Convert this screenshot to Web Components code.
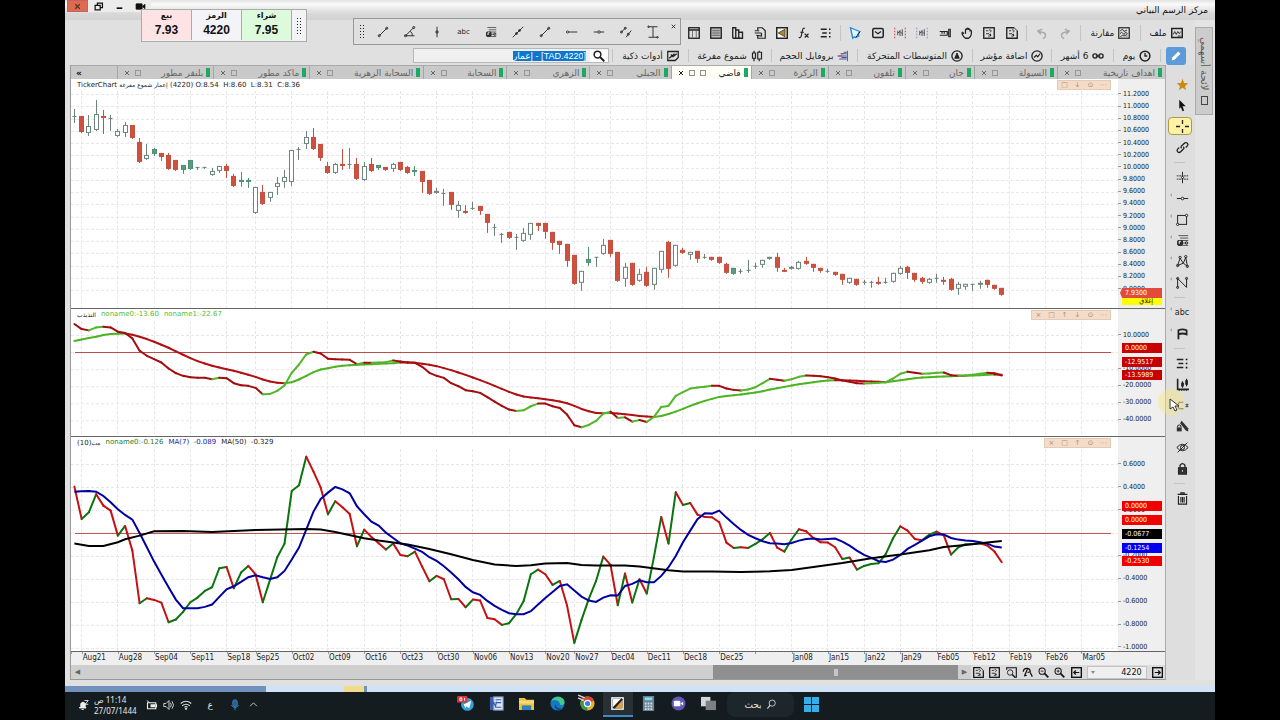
<!DOCTYPE html>
<html lang="ar">
<head>
<meta charset="utf-8">
<title>مركز الرسم البياني</title>
<style>
    body {
        margin: 0;
        background: #000;
        font-family: "DejaVu Sans", "Noto Sans", sans-serif;
        font-size: 9px;
        color: #222;
    }
</style>
</head>
<body>
<chart-desktop></chart-desktop>

<script>
// all icons share a 16x16 box and are stroked with the current colour
const icons = {
    file: '<rect x="1" y="2" width="14" height="12" stroke-width="2"/><path d="M3 10l2-4 2 4 2-4 2 3 2-3M9 12h4"/>',
    compare: '<rect x="1" y="1" width="14" height="14" stroke-width="1.6"/><path d="M3 5l3-2 2 3 4-2M3 9l2-2 3 3 2-3 3 2M3 13l3-2 2 1 4-2"/><path d="M3 7h2M10 12h3" stroke="#777"/>',
    redo: '<path d="M9 3l5 4-5 3M14 7H7C2 7 1 12 5 15" transform="rotate(-15 8 8)" stroke="#aaa" stroke-width="2"/>',
    undo: '<path d="M7 3L2 7l5 3M2 7h7c5 0 6 5 2 8" transform="rotate(15 8 8)" stroke="#aaa" stroke-width="2"/>',
    exportR: '<rect x="1" y="1" width="14" height="14" stroke-width="1.8"/><path d="M4 5h3M8 4c3-1 4 2 1 3M4 9h4l3 3M10 9v3H7"/>',
    exportL: '<path d="M15 5v10H1V1h10" stroke-width="1.8"/><path d="M11 1l4 4M4 5h3M8 4c3-1 4 2 1 3M4 9h4l3 3M10 9v3H7"/>',
    hand: '<path d="M4 9L2 7c-2 1 1 6 4 8h4c4-2 4-6 4-9 0-2-2-2-2 0V4c0-2-2-2-2 0V3c0-2-2-2-2 0v1c0-2-2-2-2 0v5" stroke-width="1.7"/>',
    ruler: '<path d="M1 6h10v5H1M4 6v3M7 6v3M11 8h2M13 3h2v10h-2z" stroke-width="1.5"/>',
    candlesRed: '<path d="M1 1v14M15 1v14" stroke="#c22" stroke-dasharray="2 2"/><path d="M5 5v6M8 4v8M11 3v9M5 8l3-2 3 3" stroke="#444"/>',
    candlesBlue: '<path d="M1 1v14M15 1v14" stroke="#6a86c8" stroke-dasharray="2 2"/><path d="M5 5v6M8 4v8M11 3v9M5 8l3-2 3 3" stroke="#444"/>',
    mail: '<rect x="1" y="2" width="14" height="12" rx="2" stroke-width="2"/><path d="M4 6l4 3 4-3" stroke-width="1.6"/>',
    pointer: '<path d="M2 1l12 5-2 4 1 2-4 2-2-1-2 2z" fill="#e8f4ff" stroke="#1b8be0" stroke-width="1.8"/><path d="M9 14l6-8" stroke="#111"/>',
    list: '<path d="M1 3h8M3 8h6M1 13h8" stroke-width="1.8"/><path d="M12 2h2v2h-2zM12 7h2v2h-2zM12 12h2v2h-2z" fill="#111" stroke="none"/>',
    fx: '<path d="M9 2C6 0 6 5 5 9s-1 6-4 5M3 7h5M9 9l5 5M14 9l-5 5" stroke-width="1.5"/>',
    speaker: '<rect x="1" y="1" width="14" height="14" fill="#fff" stroke-width="2"/><path d="M3 8l9-5v10z" fill="#a98748" stroke="#554019"/>',
    copy: '<path d="M5 4V1h6l4 4v10H5v-3M1 5h6M1 8h9M3 11l7 1V8" stroke-width="1.6"/>',
    buildings: '<path d="M1 15V1h4v14M5 4h4v11M9 7h5v8H1" stroke-width="1.8"/>',
    panel: '<rect x="1" y="1" width="14" height="14" fill="#bbb" stroke-width="1.8"/><path d="M3 5h10M3 8h10M3 11h10" stroke="#555"/>',
    table: '<rect x="1" y="1" width="14" height="14" stroke-width="1.8"/><path d="M1 4h14" stroke-width="2"/><path d="M6 5v9M11 5v9" stroke="#666"/>',
    pencil: '<path d="M2 14l1-4 8-8 3 3-8 8z" fill="#fff" stroke="none"/>',
    clock: '<circle cx="8" cy="8" r="6.5" stroke-width="2"/><path d="M8 4v4h3" stroke-width="1.7"/>',
    chain: '<circle cx="4" cy="8" r="2.8" stroke-width="1.8"/><circle cx="12" cy="8" r="2.8" stroke-width="1.8"/><path d="M5 8h6" stroke-width="1.6"/>',
    indicator: '<circle cx="8" cy="8" r="6.8" stroke-width="1.8"/><path d="M4 10l3-3 2 2 3-4" stroke-width="1.6"/>',
    average: '<circle cx="8" cy="8" r="6.8" stroke-width="1.8"/><path d="M5 11l3-7 3 7zM6 9h4" fill="#222"/>',
    profile: '<path d="M9 3h4M5 5h8M1 8h12M6 10h7M3 12h10" stroke="#46549c" stroke-width="1.5"/><path d="M5 5h4M1 8h6" stroke="#b34848"/><path d="M14 1v14" stroke="#46549c"/>',
    hollow: '<path d="M2 4h4v7H2zM4 1v3M4 11v4M9 3h5v9H9zM11 1v2M11 12v3" stroke-width="1.6"/>',
    smart: '<path d="M1 2h14v8l-4 4H1zM3 11l7-6M5 6l3 3 5-4" stroke-width="1.7"/>',
    search: '<circle cx="6" cy="6" r="4.5" stroke-width="2"/><path d="M9 9l6 6" stroke-width="2.6"/>',
    line: '<path d="M3 13L13 3"/><circle cx="3" cy="13" r="1.4"/><circle cx="13" cy="3" r="1.4"/>',
    angle: '<path d="M2 13L13 2M2 13h12M8 7q4 2 3 6"/><circle cx="2" cy="13" r="1.4"/><circle cx="13" cy="2" r="1.4"/>',
    vline: '<path d="M8 1v14"/><circle cx="8" cy="8" r="1.6"/>',
    hline: '<path d="M1 8h14"/><circle cx="8" cy="8" r="1.6" fill="#fff"/>',
    ray: '<path d="M1 8h14"/><circle cx="2" cy="8" r="1.4" fill="#fff"/>',
    fibo: '<path d="M3 2h12M5 5h10M5 8h10M8 11h5M8 14h7" stroke="#555"/><rect x="2" y="8" width="6" height="6" rx="1" fill="#333" stroke="#222"/><path d="M4 12v-3h2" stroke="#fff"/><circle cx="13" cy="11" r="1.5"/>',
    slope: '<path d="M1 15L15 1"/><circle cx="6" cy="10" r="1.3"/><circle cx="10" cy="6" r="1.3"/>',
    parallel: '<path d="M1 9l7-7M8 15l7-9"/><circle cx="2" cy="8" r="1.3"/><circle cx="7" cy="3" r="1.3"/><circle cx="11" cy="11" r="1.3"/>',
    measure: '<path d="M2 1h12M2 15h12M8 1v14"/><circle cx="2" cy="1" r="1"/><circle cx="14" cy="15" r="1"/>',
    star: '<path d="M8 1l2 5 5 .5-4 3.500 1.500 5L8 12l-4.500 3L5 10 1 6.500 6 6z" fill="#c98c12" stroke="none"/>',
    arrow: '<path d="M4 1l8 8H8l2 5-2 1-2-5-2 2z" fill="#111" stroke="none"/>',
    cross: '<path d="M8 0v5M8 11v5M0 8h5M11 8h5" stroke-width="1.6"/>',
    link: '<path d="M7 9c-2-2 0-3 1-4l2-2c3-3 6 1 4 3l-2 2M9 7c2 2 0 3-1 4l-2 2c-3 3-6-1-4-3l2-2" stroke-width="1.6"/>',
    crossline: '<path d="M8 1v14"/><path d="M1 6h14M1 10h14" stroke-dasharray="2 1"/><circle cx="8" cy="8" r="1.300" fill="#fff"/>',
    square: '<rect x="2" y="3" width="11" height="11"/><circle cx="13" cy="3" r="1.4" fill="#fff"/><circle cx="2" cy="14" r="1.4" fill="#fff"/>',
    pattern: '<path d="M2 13L5 4l4 6 3-7 2 11-5-4z"/><circle cx="2" cy="13" r="1.4"/><circle cx="5" cy="3" r="1.4"/><circle cx="12" cy="2" r="1.4"/><circle cx="14" cy="14" r="1.4"/>',
    zigzag: '<path d="M2 14V3l11 11V3"/><circle cx="2" cy="14" r="1.300"/><circle cx="2" cy="3" r="1.300"/><circle cx="13" cy="3" r="1.300"/>',
    flag: '<path d="M3 3v12M3 4q5-2 10 0v5q-5-2-10 0" stroke-width="2.200"/>',
    chart: '<path d="M2 1v13h14" stroke-width="2"/><path d="M8 4v8M13 1v9M4 15v1M7 15v1M10 15v1M13 15v1" stroke-width="1.400"/><path d="M7 6h2v4H7zM12 3h2v5h-2z" fill="#222"/>',
    magnet: '<path d="M9 4H4q-3 4 0 8h5M12 6l3 4M15 6l-3 4" stroke="#555" stroke-width="1.500"/>',
    editlock: '<path d="M5 4l2-3 8 9v4l-3-1z" fill="#333" stroke="none"/><rect x="1" y="9" width="6" height="5" fill="#333" stroke="none"/><path d="M2 9V7q2-2 4 0v2"/>',
    eye: '<path d="M1 8q7-8 14 0-7 8-14 0zM2 14L14 2"/><circle cx="8" cy="8" r="2.500"/>',
    lock: '<rect x="3" y="7" width="10" height="8" fill="#333"/><path d="M5 7V4q3-4 6 0v3" stroke-width="1.6"/><path d="M8 10v2" stroke="#ddd"/>',
    trash: '<path d="M2 3h12M6 3V1h4v2M3 5v10h10V5M6 6v7M8 6v7M10 6v7" stroke-width="1.4"/>',
    zoomArea: '<path d="M1 4V1h14v14h-3" stroke-width="1.6"/><circle cx="6" cy="8" r="4"/><path d="M9 11l4 4" stroke-width="2"/>',
    zoomPlay: '<path d="M2 7q0-5 5-5t5 5l-4 1M8 3l-4 9M12 8l3 6M3 13l4-1" stroke-width="1.8"/>',
    zoomOut: '<circle cx="6" cy="6" r="4.5" stroke-width="1.5"/><path d="M9 9l6 6" stroke-width="2.400"/><path d="M4 6h4"/>',
    zoomIn: '<circle cx="6" cy="6" r="4.5" stroke-width="1.5"/><path d="M9 9l6 6" stroke-width="2.400"/><path d="M4 6h4M6 4v4"/>',
    boxLeft: '<rect x="1" y="1" width="14" height="14" stroke-width="2"/><path d="M12 8H4M7 5L4 8l3 3" stroke-width="1.8"/>',
    boxRight: '<rect x="1" y="1" width="14" height="14" stroke-width="2"/><path d="M4 8h8M9 5l3 3-3 3" stroke-width="1.8"/>',
    close: '<path d="M4 4l8 8M12 4l-8 8" stroke-width="2"/>',
    restore: '<path d="M6 6V2h9v8h-4M2 6h9v8H2z" stroke-width="2.200"/>',
    minimize: '<path d="M3 11h10" stroke-width="3"/>',
    camera: '<rect x="0" y="3" width="11" height="10" rx="1" fill="#111"/><path d="M11 8l5-4v8z" fill="#111"/>',
    bell: '<path d="M3 12h9l-1-2V6q-3-4-6 0v4zM6 14h3" fill="#eee" stroke="#eee"/><path d="M10 2h5l-4 5h4" stroke="#eee"/>',
    battery: '<path d="M2 5h11v8H2zM14 7v4" stroke="#eee" stroke-width="1.500"/><path d="M6 7h6v4H6z" fill="#eee" stroke="none"/><path d="M1 2l4 3" stroke="#eee"/>',
    sound: '<path d="M1 6h3l4-4v12l-4-4H1zM10 5q2 3 0 6M12 3q4 5 0 10" stroke="#ddd"/>',
    wifi: '<path d="M1 6q7-6 14 0M3 9q5-4 10 0M6 11q2-2 4 0" stroke="#ddd" stroke-width="1.500"/><circle cx="8" cy="13" r="1" fill="#ddd"/>',
    mic: '<rect x="5" y="1" width="6" height="9" rx="3" fill="#285f93" stroke="#3c7fb8"/><path d="M3 8q5 7 10 0M8 12v3" stroke="#3c8bcc"/>',
    up: '<path d="M2 11l6-6 6 6" stroke="#ddd" stroke-width="1.500"/>',
    telegram: '<circle cx="9" cy="9" r="6.800" fill="#35a0d8" stroke="none"/><path d="M5 9l8-4-2 8-3-2-1 2z" fill="#fff" stroke="none"/><rect x="-2" y="0" width="11" height="7" rx="1" fill="#d8363a" stroke="none"/><path d="M1 2v3h2V2zM6 2v3" stroke="#fff" stroke-width="1"/>',
    word: '<rect x="1" y="1" width="10" height="14" fill="#3d5fae" stroke="none"/><rect x="5" y="1" width="10" height="14" fill="#dde6f6" stroke="#8496c2"/><path d="M7 4h6M7 7h6M7 12h6" stroke="#365aa5"/><path d="M2 6l1 5 2-4 2 4 1-5" stroke="#365aa5"/>',
    folder: '<path d="M0 2h6l2 2h8v11H0z" fill="#f2c23d" stroke="none"/><path d="M0 5h16v3H0z" fill="#fadb7c" stroke="none"/><path d="M3 15v-5h10v5z" fill="#2d83bf" stroke="none"/>',
    edge: '<circle cx="8" cy="8" r="7.500" fill="#1778c3" stroke="none"/><path d="M1 6C4-2 16 0 15.500 7c-1 4-5 3-5 1C10 4 3 3 1 6z" fill="#44c98c" stroke="none"/><path d="M6 8c0 4 4 6 8 5-3 4-9 2-9-2z" fill="#0d4c91" stroke="none"/>',
    chrome: '<circle cx="8" cy="8" r="7.500" fill="#e2b627" stroke="none"/><path d="M8 8L1.500 4a7.500 7.500 0 0 1 13.500 1z" fill="#d94436" stroke="none"/><path d="M8 8L1.500 4A7.500 7.500 0 0 0 8 15.500z" fill="#3a9a52" stroke="none"/><circle cx="8" cy="8" r="3.400" fill="#3c7fe0" stroke="#fff"/><path d="M-2-1l7 3M-2 2l6 3" stroke="#ddd" stroke-width="1.500"/>',
    ticker: '<rect x="2" y="2" width="12" height="12" fill="#242424" stroke="#fff" stroke-width="1.500"/><path d="M3 3h9L3 12z" fill="#fff" stroke="none"/><path d="M13 4v9H5z" fill="#e4a32e" stroke="none"/><path d="M4 13l9-10" stroke="#222" stroke-width="2"/>',
    calc: '<rect x="2" y="0" width="12" height="16" fill="#6b8390" stroke="none"/><path d="M4 3h8" stroke="#7fdcf5" stroke-width="3"/><path d="M5 7v8M8 7v8M11 7v8" stroke="#c9e3eb" stroke-width="2" stroke-dasharray="2 1"/>',
    chat: '<circle cx="8" cy="8" r="7.500" fill="#6157b4" stroke="none"/><rect x="3" y="5" width="7" height="6" rx="1" fill="#fff" stroke="none"/><path d="M10 8l3-2v4z" fill="#fff" stroke="none"/>',
    tasks: '<rect x="0" y="1" width="10" height="10" fill="#d6d6d6" stroke="none"/><rect x="5" y="5" width="11" height="10" fill="#7c8082" stroke="none"/>',
    windows: '<path d="M0 0h7.500v7.500H0zM8.500 0H16v7.500H8.500zM0 8.500h7.500V16H0zM8.500 8.500H16V16H8.500z" fill="#36aeea" stroke="none"/>',
    find: '<circle cx="9" cy="6" r="4.500" stroke="#ddd"/><path d="M6 9l-4 5" stroke="#ddd" stroke-width="1.500"/>'
};

class AppIcon extends HTMLElement {

    constructor() {
        super();
        this.attachShadow({ mode: "open" });
    }

    connectedCallback() {
        this.shadowRoot.innerHTML = `
            <style>
                :host { display: block; flex: none; width: 12px; height: 12px; }
                svg { display: block; width: 100%; height: 100%; overflow: visible; }
            </style>
            <svg viewBox="0 0 16 16" fill="none" stroke="currentColor" stroke-width="1.200">${icons[this.getAttribute("name")]}</svg>
        `
    }
}

customElements.define("app-icon", AppIcon);

// a borderless button: icon first, optional caption in the slot
class ToolButton extends HTMLElement {

    constructor() {
        super();
        this.attachShadow({ mode: "open" });
    }

    connectedCallback() {
        this.shadowRoot.innerHTML = `
            <style>
                :host { display: block; }
                button {
                    display: flex;
                    align-items: center;
                    justify-content: center;
                    gap: 4px;
                    width: 100%;
                    padding: 0;
                    border: 0;
                    background: none;
                    color: inherit;
                    font: inherit;
                    white-space: nowrap;
                }
                app-icon { width: var(--icon, 12px); height: var(--icon, 12px); }
            </style>
            <button type="button" aria-label="${this.getAttribute("icon")}">
                <app-icon name="${this.getAttribute("icon")}"></app-icon><slot></slot>
            </button>
        `
    }
}

customElements.define("tool-button", ToolButton);

const buttons = names => names.split(" ").map(n => `<tool-button icon="${n}"></tool-button>`).join("");
// grid tracks that share the width in the given proportions
const tracks = widths => widths.map(w => `minmax(0, ${w}fr)`).join(" ");

class TitleBar extends HTMLElement {

    constructor() {
        super();
        this.attachShadow({ mode: "open" });
    }

    connectedCallback() {
        this.shadowRoot.innerHTML = `
            <style>
                :host {
                    display: flex;
                    justify-content: space-between;
                    height: 20px;
                    background: linear-gradient(#e2e2e2, #fafafa 20%, #d8d8d8 70%, #d2d2d2);
                }
                .controls { display: flex; height: 12px; margin-left: 2px; background: #ececec; color: #111; --icon: 9px; }
                tool-button { display: grid; place-items: center; width: 21px; }
                tool-button:first-child { background: #de6a50; color: #532; outline: 1px solid #b66; outline-offset: -1px; }
                h1 { margin: 0 7px; font-size: 9px; line-height: 20px; font-weight: normal; color: #111; }
            </style>
            <div class="controls">${buttons("close restore minimize camera")}</div>
            <h1 dir="rtl"><slot></slot></h1>
        `
    }
}

customElements.define("title-bar", TitleBar);

class ToolbarRows extends HTMLElement {

    constructor() {
        super();
        this.attachShadow({ mode: "open" });
    }

    connectedCallback() {
        this.shadowRoot.innerHTML = `
            <style>
                :host { display: block; padding-right: 4px; font-size: 9px; }
                .row { display: grid; height: 20px; }
                .row.first { height: 26px; grid-template-columns: ${tracks([50, 60, 54, 186, 161, 609])}; }
                .row.second { height: 19px; grid-template-columns: ${tracks([30, 47, 62, 79, 115, 86, 83, 76, 203, 339])}; }
                .group { display: flex; align-items: center; justify-content: space-around; box-sizing: border-box; min-width: 0; padding: 0 3px; }
                .group + .group { border-right: 1px solid; border-image: linear-gradient(transparent 20%, #c4c4c4 20% 80%, transparent 80%) 1; }
                .pen { display: grid; place-items: center; width: 20px; height: 18px; flex: none; border-radius: 3px; background: #5b9bd8; }
                .search { flex: 1; display: flex; align-items: center; height: 13px; border: 1px solid #b8b8b8; background: #f0f0f0; }
                input { flex: 1; min-width: 0; border: 0; padding: 0 4px; background: #f0f0f0; font: 9px "Liberation Sans", "DejaVu Sans", sans-serif; outline: 0; }
                input::selection { background: #0a78d0; color: #fff; }
                .search tool-button { padding: 0 3px; background: #fff; }
            </style>
            <div class="row first" dir="rtl">
                <div class="group"><tool-button icon="file">ملف</tool-button></div>
                <div class="group"><tool-button icon="compare">مقارنة</tool-button></div>
                <div class="group">${buttons("redo undo")}</div>
                <div class="group">${buttons("exportL exportR hand ruler candlesBlue candlesRed mail pointer")}</div>
                <div class="group">${buttons("list fx speaker copy buildings panel table")}</div>
            </div>
            <div class="row second" dir="rtl">
                <div class="group"><span class="pen"><tool-button icon="pencil"></tool-button></span></div>
                <div class="group"><tool-button icon="clock">يوم</tool-button></div>
                <div class="group"><tool-button icon="chain">6 أشهر</tool-button></div>
                <div class="group"><tool-button icon="indicator">اضافة مؤشر</tool-button></div>
                <div class="group"><tool-button icon="average">المتوسطات المتحركة</tool-button></div>
                <div class="group"><tool-button icon="profile">بروفايل الحجم</tool-button></div>
                <div class="group"><tool-button icon="hollow">شموع مفرغة</tool-button></div>
                <div class="group"><tool-button icon="smart">أدوات ذكية</tool-button></div>
                <div class="group"><div class="search">
                    <tool-button icon="search"></tool-button>
                    <input type="text" aria-label="رمز" dir="rtl" value="[TAD.4220] - إعمار">
                </div></div>
            </div>
        `
        const box = this.shadowRoot.querySelector("input");
        box.focus();
        box.select();
    }
}

customElements.define("toolbar-rows", ToolbarRows);

class TabStrip extends HTMLElement {

    constructor() {
        super();
        this.attachShadow({ mode: "open" });
    }

    connectedCallback() {
        // caption and relative width
        const tabs = [["اهداف تاريخية", 108], ["السيولة", 83], ["جان", 69], ["تلفون", 77], ["الركزة", 77],
            ["فاضي", 80], ["الجبلي", 81], ["الزهري", 83], ["السحابة", 83], ["السحابة الزهرية", 114],
            ["ماكد مطور", 96], ["بلنقر مطور", 96]];
        this.dir = "rtl";
        this.shadowRoot.innerHTML = `
            <style>
                :host { display: grid; grid-template-columns: ${tracks([...tabs.map(t => t[1]), 46])}; height: 14px; background: #c9c9c9; border-top: 1px solid #aaa; box-sizing: border-box; }
                button {
                    display: flex;
                    align-items: center;
                    gap: 3px;
                    min-width: 0;
                    padding: 0 3px 0 5px;
                    border: 0;
                    border-left: 1px solid #a5a5a5;
                    background: none;
                    color: #666;
                    font: inherit;
                    white-space: nowrap;
                }
                button.active { background: #fffff8; color: #222; }
                i { width: 4px; height: 9px; flex: none; background: #1fa863; }
                span { margin-right: auto; }
                b { width: 4px; height: 4px; margin: 0 1px; border: 1px solid currentColor; opacity: 0.5; }
                app-icon { width: 8px; height: 8px; }
                .more { border: 0; justify-content: flex-end; color: #111; font-weight: bold; }
            </style>
            ${tabs.map(([name]) => `
                <button type="button" class="${name === "فاضي" ? "active" : ""}">
                    <i></i>${name}<span></span>${name === "فاضي" ? "<b></b>" : ""}<b></b><app-icon name="close"></app-icon>
                </button>`).join("")}
            <button type="button" class="more">»</button>
        `
    }
}

customElements.define("tab-strip", TabStrip);

const BARS = 128;
const WIDTH = 1047;
const barX = i => 3.4 + i * 7.245;
// bars on which a labelled week starts
const weeks = [1, 6, 11, 16, 21, 25, 30, 35, 40, 45, 50, 55, 60, 65, 69, 74, 79, 84, 89, 94, 99, 104, 109, 114, 119, 124, 129, 134, 139];

// kind, high, body top, body bottom, low
const candles = `d30,37,38,43 r37,37,53,53 h36,47,54,56 h21,35,51,51 r31,37,38,54 d36,39,40,51 h50,52,57,57 h43,46,54,57 r46,46,59,59 r59,63,83,83
h65,76,80,80 g69,70,75,76 r74,74,78,81 r74,76,90,90 r81,81,91,91 g86,86,91,94 g81,81,90,90 d88,88,89,90 d88,88,89,89 h89,92,96,96
h87,87,92,93 r85,87,92,98 r95,97,107,107 g93,101,102,107 g99,101,102,108 h108,108,134,134 r106,113,125,125 h113,113,119,122 h98,104,108,115 h91,98,103,108
h71,71,103,106 d68,70,71,80 h52,58,65,69 r49,58,70,70 r65,65,79,81 r83,87,94,94 h84,85,94,94 r70,85,87,90 d69,85,86,89 r79,85,100,100
h83,87,101,101 r79,85,92,92 g86,86,89,90 r88,88,91,91 h84,85,90,92 r83,83,91,91 r87,88,94,94 g87,91,93,96 r92,92,103,113 r101,101,115,115
h109,112,114,114 d110,114,115,126 r113,113,126,130 h122,126,132,138 r126,132,133,134 d123,129,130,130 r127,127,132,135 r135,135,144,153 d145,148,149,156 d154,155,156,163
r153,153,159,159 d155,158,159,170 h149,154,162,162 h144,144,156,160 r144,144,147,151 r144,144,153,159 r153,153,164,170 r162,162,166,174 r165,165,182,187 r176,176,205,205
h192,192,204,211 g168,180,184,186 d178,178,179,187 h160,166,175,175 r161,161,175,177 r173,173,202,202 h184,188,200,207 r184,184,206,206 h190,195,202,202 r188,193,207,207
h189,189,206,210 h172,172,191,193 r162,163,190,198 h166,166,187,187 r169,171,174,174 h173,173,176,180 r172,172,180,183 d175,178,179,179 r178,178,181,181 r178,178,184,184
r184,185,194,194 g189,189,195,195 d190,192,193,194 d181,191,192,193 d184,187,188,189 h181,181,186,188 h178,178,180,180 r174,178,189,192 r189,191,192,192 h187,188,190,190
h182,183,190,190 r178,182,185,185 r185,185,189,192 r189,189,192,193 d190,192,193,193 r193,193,196,196 r195,195,201,205 h199,199,204,204 r200,200,206,206 d201,203,204,205
d202,203,204,208 r198,203,205,205 d199,203,204,204 h194,194,203,203 h187,189,195,195 r187,188,194,199 r194,194,201,202 r198,199,203,204 h199,200,204,204 d195,199,200,203
r198,201,202,205 r199,200,211,211 h203,205,210,215 h205,205,208,210 d205,205,206,211 h202,204,206,209 r201,201,206,208 r206,206,210,210 r209,209,216,216`.split(/\s+/);

const fast = [72,87,91,82,80,82,95,99,115,152,167,177,187,205,219,227,231,233,233,237,233,234,249,255,257,263,282,281,272,256,218,193,163,155,160,176,177,178,179,192,188,188,187,186,181,184,187,188,200,218,227,233,249,258,270,273,278,291,304,317,328,332,330,318,310,310,318,323,343,375,381,374,362,340,334,353,351,364,359,365,350,320,317,287,276,265,262,260,257,257,265,269,271,268,261,249,236,239,242,237,230,226,227,228,231,235,241,245,249,250,249,248,246,235,221,215,218,221,220,218,217,225,227,226,224,221,218,219,226];
const slow = [123,118,114,110,105,102,101,100,104,110,117,125,134,143,154,164,174,183,190,197,202,207,212,218,224,230,238,244,248,249,246,238,227,216,208,204,200,197,195,194,193,192,191,190,189,187,187,188,191,194,198,204,210,217,224,232,240,248,257,266,275,283,289,292,294,297,300,304,309,317,326,333,338,339,338,340,342,344,347,349,350,347,341,334,326,317,309,302,296,290,287,285,283,280,277,273,268,264,260,256,252,249,246,243,241,240,240,241,242,243,244,245,246,243,240,237,234,232,231,230,229,228,227,227,226,225,224,223,224];
const momentum = [560,657,637,583,617,632,707,678,752,910,895,900,908,967,959,936,907,893,873,862,805,801,865,818,798,823,907,840,772,731,573,556,470,515,563,643,604,622,642,739,689,711,730,749,731,765,769,755,800,844,828,838,898,897,922,899,902,954,958,975,970,942,904,823,809,823,855,843,917,1029,960,897,843,770,795,916,821,908,838,881,770,651,731,577,615,609,644,651,652,667,728,744,742,744,732,718,699,743,755,718,688,694,714,727,728,742,777,773,809,798,792,790,762,715,679,692,717,721,704,695,706,764,742,733,732,730,737,755,787];
const ma7 = [575,574,573,575,588,607,628,645,659,699,742,785,824,862,899,925,925,925,921,914,891,868,859,846,832,826,832,837,832,813,779,743,689,635,597,578,561,568,580,619,643,665,677,698,714,730,737,746,756,772,783,799,818,838,861,877,885,903,918,930,940,943,943,934,914,894,876,858,853,872,890,902,906,893,886,887,858,852,841,847,847,828,802,768,727,692,658,640,641,632,653,672,690,705,715,724,730,731,733,729,722,717,716,719,717,716,725,737,752,765,774,784,786,779,765,747,735,722,709,703,704,714,719,722,723,727,731,740,743];
const ma50 = [[0,731],[2,738],[4,738],[6,727],[7,718],[9,707],[11,694],[15,693],[19,696],[25,690],[32,687],[34,689],[36,696],[40,715],[42,722],[46,734],[49,747],[52,763],[55,780],[58,794],[61,798],[63,796],[65,791],[68,789],[70,795],[72,797],[76,797],[78,800],[82,811],[84,815],[88,815],[92,816],[96,814],[99,810],[102,801],[106,789],[110,775],[114,764],[118,751],[120,741],[123,735],[126,728],[128,723]];

function drawCandles() {
    return candles.map((text, i) => {
        const [high, top, bottom, low] = text.slice(1).split(",").map(Number);
        const kind = text[0];
        const x = Math.floor(barX(i)) + 0.5;
        const stroke = { r: "#c4503f", h: "#6d857b", g: "#4f8f72", d: "#6d7f79" }[kind];
        const fill = { r: "#d0503f", h: "#fff", g: "#5c9b80", d: "#6d7f79" }[kind];
        return `<path d="M${x} ${high}V${low + 1}" stroke="${stroke}"/>` +
            (kind === "d" ? `<path d="M${x - 2} ${top + 0.5}h4" stroke="${stroke}"/>` :
            `<rect x="${x - 2}" y="${top + 0.5}" width="4" height="${Math.max(bottom - top - 1, 1)}" fill="${fill}" stroke="${stroke}"/>`);
    }).join("");
}

// lines are recorded at three units per pixel
const lineY = (value, top) => value / 3 - top;

function drawTrend(values, top, rise, fall) {
    let out = "";
    for (let i = 1; i <= BARS; i++) {
        out += `<path d="M${barX(i - 1)} ${lineY(values[i - 1], top)}L${barX(i)} ${lineY(values[i], top)}" stroke="${values[i] < values[i - 1] ? rise : fall}" stroke-width="2" stroke-linecap="round"/>`;
    }
    return out;
}

function drawLine(points, top, color) {
    const d = points.map(([i, v]) => `${barX(i)},${lineY(v, top)}`).join(" ");
    return `<polyline points="${d}" stroke="${color}" stroke-width="2"/>`;
}

// heights double as the panes' flex shares; an empty label lies fully behind a badge
const panes = {
    price: {
        height: 230, first: 15, step: 12.25,
        labels: Array.from({ length: 17 }, (_, k) => (11.2 - k * 0.2).toFixed(4)),
        tools: ["□", "↓", "⊙", "⋯"],
        legend: '<span>TickerChart <bdi>إعمار شموع مفرغة</bdi> (4220) O:8.54&nbsp; H:8.60&nbsp; L:8.31&nbsp; C:8.36</span>',
        draw: drawCandles,
        badges: [["7.9300", 215, "#e24b3c", "price"], ["إغلاق", 222, "#ff0", "close"]]
    },
    trend: {
        height: 128, first: 26, step: 17,
        labels: ["10.0000", "", "-10.0000", "-20.0000", "-30.0000", "-40.0000"],
        tools: ["×", "□", "↑", "↓", "⊙", "⋯"],
        legend: '<span><bdi>التذبذب</bdi></span><span style="color:#5b3">noname0:-13.60</span><span style="color:#5b3">noname1:-22.67</span>',
        zero: 43,
        draw: () => drawTrend(slow, 9, "#4db323", "#b01012") + drawTrend(fast, 9, "#54b52b", "#a30d10"),
        badges: [["0.0000", 39, "#c80000"], ["-12.9517", 53, "#c80000"], ["-13.5989", 67, "#c80000"]]
    },
    momentum: {
        height: 215, first: 27, step: 23,
        labels: ["0.6000", "0.4000", "0.2000", "", "-0.2000", "-0.4000", "-0.6000", "-0.8000", "-1.0000"],
        tools: ["×", "□", "↑", "⊙", "⋯"],
        legend: '<span>(10)<bdi>مت</bdi></span><span style="color:#2a7a2a">noname0:-0.126</span><span style="color:#22a">MA(7)&nbsp; -0.089</span><span>MA(50)&nbsp; -0.329</span>',
        zero: 96,
        draw: () => drawTrend(momentum, 137, "#0b740f", "#c51114") +
            drawLine(ma7.map((v, i) => [i, v]), 137, "#0000a0") + drawLine(ma50, 137, "#000"),
        badges: [["0.0000", 69, "#f00000"], ["0.0000", 83, "#f00000"], ["-0.0677", 97, "#000"], ["-0.1254", 111, "#0000f0"], ["-0.2530", 125, "#f00000"]]
    }
};

class ChartPane extends HTMLElement {

    constructor() {
        super();
        this.attachShadow({ mode: "open" });
    }

    connectedCallback() {
        const pane = panes[this.getAttribute("kind")];
        const percent = y => y / pane.height * 100 + "%";
        this.style.flex = pane.height;
        this.shadowRoot.innerHTML = `
            <style>
                :host { display: flex; min-height: 0; box-sizing: border-box; border-bottom: 1px solid #666; background: #fff; font-size: 7px; }
                .plot { flex: ${WIDTH}; position: relative; min-width: 0; }
                svg { position: absolute; width: 100%; height: 100%; }
                .legend { position: relative; display: flex; gap: 5px; padding-left: 6px; line-height: 11px; white-space: pre; color: #222; }
                bdi { font-size: 6px; }
                .tools { position: absolute; top: 2px; right: 8px; display: flex; background: #f4dcc8; outline: 1px solid #e4cbb6; }
                .tools button { width: 13px; height: 8px; padding: 0; border: 0; background: none; color: #a9907c; font: 7px/8px "DejaVu Sans", sans-serif; }
                .axis { flex: 47; position: relative; background: #efefef; color: #222; font: 7px "DejaVu Sans Condensed", "DejaVu Sans", sans-serif; }
                .labels { display: grid; grid-template-rows: ${percent(pane.first - pane.step / 2)}; grid-auto-rows: ${percent(pane.step)}; height: 100%; }
                .labels span { display: flex; align-items: center; gap: 2px; min-height: 0; }
                .labels span:not(:empty)::before { content: ""; width: 3px; height: 1px; background: #999; }
                .badge { position: absolute; left: 4px; right: 3px; height: 10px; margin-top: -5px; padding-left: 3px; line-height: 10px; color: #fff; }
                .badge.price { clip-path: polygon(0 50%, 5% 0, 100% 0, 100% 100%, 5% 100%); left: 2px; padding-left: 5px; z-index: 1; }
                .badge.close { padding-right: 9px; line-height: 12px; text-align: right; color: #222; }
            </style>
            <div class="plot">
                <svg viewBox="0 0 ${WIDTH} ${pane.height - 1}" preserveAspectRatio="none" fill="none">
                    <g stroke="#e7e7e7" stroke-dasharray="3 2">
                        ${pane.labels.map((_, k) => `<path d="M0 ${Math.round(pane.first + k * pane.step) + 0.5}H${WIDTH}"/>`).join("")}
                        ${weeks.map(i => `<path d="M${Math.floor(barX(i)) + 0.5} 12V${pane.height}"/>`).join("")}
                    </g>
                    ${pane.zero ? `<path d="M4 ${pane.zero + 0.5}H1040" stroke="#b84e4e"/>` : ""}
                    ${pane.draw()}
                </svg>
                <div class="legend">${pane.legend}</div>
                <div class="tools">${pane.tools.map(t => `<button type="button">${t}</button>`).join("")}</div>
            </div>
            <div class="axis">
                <div class="labels"><span></span>${pane.labels.map(t => `<span>${t}</span>`).join("")}</div>
                ${pane.badges.map(([text, y, color, kind]) => `<div class="badge ${kind || ""}" style="top:${percent(y)};background:${color}">${text}</div>`).join("")}
            </div>
        `
    }
}

customElements.define("chart-pane", ChartPane);

class DateAxis extends HTMLElement {

    constructor() {
        super();
        this.attachShadow({ mode: "open" });
    }

    connectedCallback() {
        const names = "Aug21 Aug28 Sep04 Sep11 Sep18 Sep25 Oct02 Oct09 Oct16 Oct23 Oct30 Nov06 Nov13 Nov20 Nov27 Dec04 Dec11 Dec18 Dec25 - Jan08 Jan15 Jan22 Jan29 Feb05 Feb12 Feb19 Feb26 Mar05".split(" ");
        const edges = [0, ...weeks.map(barX), WIDTH + 47];
        this.shadowRoot.innerHTML = `
            <style>
                :host { display: grid; grid-template-columns: ${tracks(edges.slice(1).map((x, k) => x - edges[k]))}; height: 13px; background: #efefef; font: 8px/12px "DejaVu Sans Condensed", "DejaVu Sans", sans-serif; }
                span { min-width: 0; white-space: nowrap; border-left: 1px solid; border-image: linear-gradient(#999 3px, transparent 3px) 1; }
            </style>
            <span></span>${names.map(n => `<span>${n === "-" ? "" : n}</span>`).join("")}
        `
    }
}

customElements.define("date-axis", DateAxis);

class ScrollRow extends HTMLElement {

    constructor() {
        super();
        this.attachShadow({ mode: "open" });
    }

    connectedCallback() {
        this.shadowRoot.innerHTML = `
            <style>
                :host { display: grid; grid-template-columns: ${tracks([900, 194])}; height: 15px; box-sizing: border-box; border-bottom: 1px solid #999; background: #dcdcdc; color: #111; --icon: 11px; }
                .track { display: flex; background: #cfcfcf; }
                .track button { width: 13px; padding: 0; border: 0; background: none; color: #666; font: 7px/14px "DejaVu Sans", sans-serif; }
                .rest { flex: 629; }
                .thumb { flex: 245; display: grid; place-items: center; background: #8f8f8f; }
                .thumb::after { content: ""; width: 4px; height: 7px; background: #c6c6c6; }
                .tools { display: flex; align-items: center; justify-content: space-between; padding: 0 2px; }
                select { appearance: none; width: 60px; height: 13px; padding: 0 4px; border: 1px solid #c4c4c4; background: #efefef; color: #111; font: 9px "DejaVu Sans Condensed", sans-serif; text-align: right; }
                .combo { position: relative; display: flex; }
                .combo i { position: absolute; left: 4px; top: 5px; border: 2px solid transparent; border-top: 3px solid #888; }
            </style>
            <div class="track">
                <button type="button" aria-label="left">◀</button><div class="rest"></div><div class="thumb"></div><button type="button" aria-label="right">▶</button>
            </div>
            <div class="tools">
                ${buttons("exportL exportR zoomArea zoomPlay zoomOut zoomIn boxLeft")}
                <label class="combo"><select aria-label="رمز"><option>4220</option></select><i></i></label>
                ${buttons("boxRight")}
            </div>
        `
    }
}

customElements.define("scroll-row", ScrollRow);

class DrawRail extends HTMLElement {

    constructor() {
        super();
        this.attachShadow({ mode: "open" });
    }

    connectedCallback() {
        const names = "star arrow cross link - crossline hline square fibo pattern zigzag - abc flag - list chart magnet editlock eye lock - trash".split(" ");
        const more = ["hline", "square", "fibo", "pattern", "zigzag", "flag"];
        this.shadowRoot.innerHTML = `
            <style>
                :host { display: block; box-sizing: border-box; width: 30px; padding: 9px 3px 0 2px; border-left: 1px solid #aaa; background: #dedede; --icon: 13px; }
                .item { display: grid; place-items: center; height: 21px; padding-left: 4px; position: relative; font-size: 8px; }
                .item.more::before { content: ""; position: absolute; left: 0; top: 5px; border: 2px solid transparent; border-right-color: #aaa; }
                .active { margin: 1px 0 2px; height: 16px; border: 1px solid #ac9a4c; border-radius: 4px; background: #fdf2a6; }
                hr { width: 11px; height: 1px; margin: 4px 0 4px 6px; border: 0; background: #c2c2c2; }
            </style>
            ${names.map(n => n === "-" ? "<hr>" : n === "abc" ? '<div class="item more"><span>abc</span></div>' :
                `<div class="item ${n === "cross" ? "active" : ""} ${more.includes(n) ? "more" : ""}"><tool-button icon="${n}"></tool-button></div>`).join("")}
        `
    }
}

customElements.define("draw-rail", DrawRail);

class QuoteBox extends HTMLElement {

    constructor() {
        super();
        this.attachShadow({ mode: "open" });
    }

    connectedCallback() {
        this.shadowRoot.innerHTML = `
            <style>
                :host { display: flex; border: 1px solid #aaa; background: #f3f3f5; text-align: center; }
                div { width: 49px; height: 30px; border-right: 1px solid #aaa; color: #111; font-size: 8px; line-height: 12px; font-weight: bold; }
                div:nth-of-type(1) { background: #fde3e3; }
                div:nth-of-type(2) { background: #f3f3f8; }
                div:nth-of-type(3) { background: #ddfadd; }
                b { display: block; font: bold 12px/17px "Liberation Sans", sans-serif; }
                i { width: 6px; height: 17px; margin: 7px 4px; background: radial-gradient(#222 1px, transparent 1px) 0 0 / 3px 3px; }
            </style>
            <div>بيع<b>7.93</b></div><div>الرمز<b>4220</b></div><div>شراء<b>7.95</b></div><i></i>
        `
    }
}

customElements.define("quote-box", QuoteBox);

class DrawPalette extends HTMLElement {

    constructor() {
        super();
        this.attachShadow({ mode: "open" });
    }

    connectedCallback() {
        this.shadowRoot.innerHTML = `
            <style>
                :host { display: flex; align-items: center; height: 25px; border: 1px solid #999; background: #e0e0e0; color: #444; }
                i { width: 6px; height: 15px; margin: 0 4px 0 5px; background: radial-gradient(#222 1px, transparent 1px) 0 0 / 3px 3px; }
                tool-button, span { width: 27px; text-align: center; font-size: 7px; color: #222; }
                .close { align-self: flex-start; width: 14px; margin-top: 4px; --icon: 7px; }
            </style>
            <i></i>${buttons("line angle vline")}<span>abc</span>${buttons("fibo slope line ray hline parallel measure")}
            <tool-button class="close" icon="close"></tool-button>
        `
    }
}

customElements.define("draw-palette", DrawPalette);

class TaskBar extends HTMLElement {

    constructor() {
        super();
        this.attachShadow({ mode: "open" });
    }

    connectedCallback() {
        this.shadowRoot.innerHTML = `
            <style>
                :host { display: grid; grid-template-columns: ${tracks([386, 273, 73, 28, 390])}; height: 28px; box-sizing: border-box; padding-bottom: 4px; background: #141c20; color: #e8e8e8; --icon: 15px; }
                div { display: flex; align-items: center; justify-content: center; }
                .tray { --icon: 12px; justify-content: flex-start; gap: 5px; padding-left: 12px; font-size: 9px; }
                time { margin: 0 4px 0 0; font: 8px/11px "Noto Sans", "DejaVu Sans", sans-serif; white-space: pre; }
                .tray span { margin: 0 11px; }
                .tray .up { margin-left: 3px; --icon: 9px; }
                .apps { display: grid; grid-template-columns: repeat(9, 1fr); }
                .apps tool-button { padding: 4px 0; border-bottom: 2px solid transparent; }
                .apps .on { background: #293034; border-color: #3c8ccb; }
                .search { margin: 0 3px; border-radius: 8px; background: #1d262a; font-size: 9px; --icon: 11px; }
            </style>
            <div class="tray">
                ${buttons("bell")}<time dir="ltr"><bdi dir="rtl">11:14 ص</bdi>
27/07/1444</time>${buttons("battery sound wifi")}<span>ع</span>${buttons("mic")}<tool-button class="up" icon="up"></tool-button>
            </div>
            <div class="apps">${buttons("telegram word folder edge chrome")}<tool-button class="on" icon="ticker"></tool-button>${buttons("calc chat tasks")}</div>
            <div class="search" dir="rtl"><tool-button icon="find">بحث</tool-button></div>
            <div>${buttons("windows")}</div>
        `
    }
}

customElements.define("task-bar", TaskBar);

class ChartDesktop extends HTMLElement {

    constructor() {
        super();
        this.attachShadow({ mode: "open" });
    }

    connectedCallback() {
        this.shadowRoot.innerHTML = `
            <style>
                :host { display: flex; flex-direction: column; position: relative; min-height: 100vh; margin: 0 65px; background: #e0e0e0; }
                .body { flex: 1; display: flex; padding-left: 6px; }
                .main { flex: 1; display: flex; flex-direction: column; min-width: 0; }
                .work { flex: 1; display: flex; }
                .charts { flex: 1; display: flex; flex-direction: column; min-width: 0; box-shadow: -1px 0 #999; }
                .side { width: 20px; background: #e4e4e4; }
                .side button { display: flex; align-items: center; gap: 6px; width: 18px; height: 88px; margin-top: 7px; padding: 9px 0; border: 1px solid #aaa; background: #ccc; color: #555; font: 10px "DejaVu Sans", sans-serif; writing-mode: vertical-rl; white-space: nowrap; }
                .side i { width: 5px; height: 7px; border: 1px solid #444; }
                .behind { display: grid; grid-template-columns: ${tracks([201, 78, 20, 3, 848])}; height: 6px; margin-top: 6px; background: #cfe2f6; }
                .behind .blue { background: #7092bd; }
                .behind .yellow { background: #f2dc8c; }
                quote-box { position: absolute; left: 76px; top: 9px; }
                draw-palette { position: absolute; left: 288px; top: 18px; }
                .cursor { position: absolute; right: 30px; top: 388px; width: 28px; height: 28px; border-radius: 50%; background: radial-gradient(#f6e67a88, #f6e67a66 60%, transparent 75%); }
                .cursor svg { display: block; width: 12px; height: 14px; margin: 10px 0 0 12px; }
            </style>
            <title-bar>مركز الرسم البياني</title-bar>
            <div class="body">
                <div class="main">
                    <toolbar-rows></toolbar-rows>
                    <div class="work">
                        <div class="charts">
                            <tab-strip></tab-strip>
                            <chart-pane kind="price"></chart-pane>
                            <chart-pane kind="trend"></chart-pane>
                            <chart-pane kind="momentum"></chart-pane>
                            <date-axis></date-axis>
                            <scroll-row></scroll-row>
                        </div>
                        <draw-rail></draw-rail>
                    </div>
                </div>
                <div class="side"><button type="button">لائحة أسهمي<i></i></button></div>
            </div>
            <div class="behind"><span class="blue"></span><span></span><span class="yellow"></span><span class="blue"></span></div>
            <task-bar></task-bar>
            <quote-box></quote-box>
            <draw-palette></draw-palette>
            <div class="cursor"><svg viewBox="0 0 12 14"><path d="M1 1v10l3-2 2 4 2-1-2-4h4z" fill="#fff" stroke="#333"/></svg></div>
        `
    }
}

customElements.define("chart-desktop", ChartDesktop);
</script>
</body>
</html>
